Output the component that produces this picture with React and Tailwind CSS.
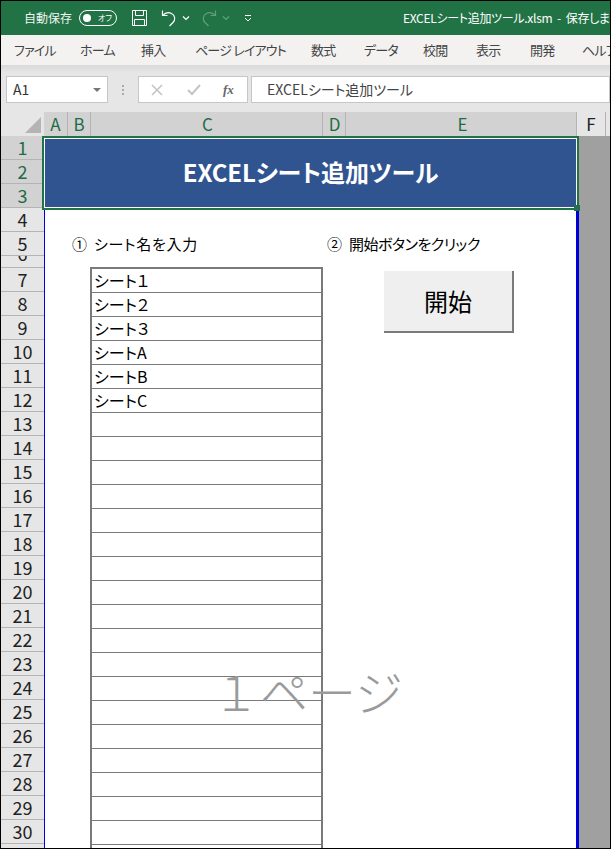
const JP = "font-['Noto_Sans_CJK_JP','Noto_Sans',sans-serif]";
const PALT = "[font-feature-settings:'palt']";

const TABS = [
  { label: "ファイル", width: "w-[66px]" },
  { label: "ホーム", width: "w-[61px]" },
  { label: "挿入", width: "w-[54px]" },
  { label: "ページ レイアウト", width: "w-[116px]" },
  { label: "数式", width: "w-[53px]" },
  { label: "データ", width: "w-[59px]" },
  { label: "校閲", width: "w-[53px]" },
  { label: "表示", width: "w-[54px]" },
  { label: "開発", width: "w-[52px]" },
  { label: "ヘルプ", width: "w-[60px]" },
];

const COLUMNS = [
  { label: "A", width: "w-[24px]" },
  { label: "B", width: "w-[23px]" },
  { label: "C", width: "w-[232px] pl-[2px]" },
  { label: "D", width: "w-[23px] pl-[1px]" },
  { label: "E", width: "w-[231px] pl-[3px]" },
];

const SHEET_NAMES = ["シート１", "シート２", "シート３", "シートA", "シートB", "シートC"];

const ROWS = Array.from({ length: 31 }, (_, i) => i + 1);
const LIST_ROWS = Array.from({ length: 25 }, (_, i) => SHEET_NAMES[i] ?? "");

const TitleBar = () => (
  <div className="h-[34px] shrink-0 bg-[#217346] flex items-center text-white overflow-hidden">
    <div className="w-[402px] shrink-0 flex items-center">
      <span className="ml-[23px] shrink-0 whitespace-nowrap text-[12px] text-[#f0f5f2]">自動保存</span>
      <div className="ml-[7px] shrink-0 w-[38px] h-[16px] rounded-full border border-white flex items-center justify-between pl-[3px] pr-[2px]">
        <span className="w-[8px] h-[8px] rounded-full bg-white" />
        <span className={`text-[8px] leading-none mr-[2px] whitespace-nowrap ${PALT}`}>オフ</span>
      </div>
      <svg className="ml-[14px] shrink-0" width="17" height="18" viewBox="0 0 17 18" fill="none" stroke="#fff" strokeWidth="1">
        <path d="M1.500 1.500h14v15h-14z" />
        <path d="M4.500 1.500v5h8v-5M3.500 16.500v-6h10v6" />
      </svg>
      <svg className="ml-[13px] shrink-0" width="16" height="18" viewBox="0 0 16 18" fill="none" stroke="#fff" strokeWidth="1.2">
        <path d="M1.500 1.500v5h5" />
        <path d="M1.500 6.500c2.500-2.500 6-3.500 9-2 4 2 4 6.500 1.500 9l-3.500 3.500" />
      </svg>
      <svg className="ml-[5px] shrink-0" width="8" height="6" viewBox="0 0 8 6" fill="none" stroke="#fff" strokeWidth="1.2">
        <path d="M1 1.500l3 3 3-3" />
      </svg>
      <svg className="ml-[11px] shrink-0" width="16" height="18" viewBox="0 0 16 18" fill="none" stroke="#5f9f7f" strokeWidth="1.2">
        <path d="M14.500 1.500v5h-5" />
        <path d="M14.500 6.500c-2.500-2.500-6-3.500-9-2-4 2-4 6.500-1.500 9l3.500 3.500" />
      </svg>
      <svg className="ml-[5px] shrink-0" width="8" height="6" viewBox="0 0 8 6" fill="none" stroke="#5f9f7f" strokeWidth="1.2">
        <path d="M1 1.500l3 3 3-3" />
      </svg>
      <svg className="ml-[14px] shrink-0" width="8" height="7" viewBox="0 0 8 7" fill="none" stroke="#fff" strokeWidth="1">
        <path d="M1 .5h6M1 3l3 3 3-3" />
      </svg>
    </div>
    <span className={`text-[12px] tracking-[-0.3px] whitespace-nowrap shrink-0 ${PALT}`}>
      EXCELシート追加ツール.xlsm&nbsp; -&nbsp; 保存しました
    </span>
  </div>
);

const TabBar = () => (
  <div className={`h-[30px] shrink-0 bg-[#f3f2f1] flex items-center pl-[13px] text-[13px] tracking-[-0.8px] text-[#444] whitespace-nowrap overflow-hidden ${PALT}`}>
    {TABS.map(({ label, width }) => (
      <span key={label} className={`${width} shrink-0`}>
        {label}
      </span>
    ))}
  </div>
);

const FormulaBar = () => (
  <div className="h-[47px] shrink-0 bg-[linear-gradient(#d9d9d9,#e6e6e6_8px)] flex items-start pt-[11px] pl-[5px]">
    <div className="w-[102px] h-[27px] bg-white border border-[#c6c6c6] flex items-center justify-between pl-[6px] pr-[6px] text-[14px] text-[#333]">
      A1
      <span className="w-0 h-0 border-x-[4px] border-x-transparent border-t-[4px] border-t-[#777]" />
    </div>
    <div className="w-[30px] h-[27px] flex flex-col items-center justify-center gap-[2px]">
      <span className="w-[2px] h-[2px] bg-[#aaa]" />
      <span className="w-[2px] h-[2px] bg-[#aaa]" />
      <span className="w-[2px] h-[2px] bg-[#aaa]" />
    </div>
    <div className="w-[110px] h-[27px] bg-white border border-[#c6c6c6] flex items-center">
      <svg className="ml-[12px]" width="12" height="12" viewBox="0 0 12 12" stroke="#c4c4c4" strokeWidth="1.6">
        <path d="M1 1l10 10M11 1L1 11" />
      </svg>
      <svg className="ml-[24px]" width="14" height="12" viewBox="0 0 14 12" fill="none" stroke="#c4c4c4" strokeWidth="2">
        <path d="M1 6l4 4 8-9" />
      </svg>
      <span className="ml-[22px] text-[13px] italic font-bold font-['Liberation_Serif',serif] text-[#666]">fx</span>
    </div>
    <div className={`ml-[3px] flex-1 h-[27px] bg-white border border-[#c6c6c6] flex items-center pl-[15px] text-[14px] text-[#444] whitespace-nowrap overflow-hidden ${PALT}`}>
      EXCELシート追加ツール
    </div>
  </div>
);

const ColumnHeader = () => (
  <div className="h-[24px] shrink-0 bg-[#e6e6e6] flex">
    <div className="w-[43px] shrink-0 flex items-end justify-end pr-[3px] pb-[3px]">
      <span className="w-0 h-0 border-l-[16px] border-l-transparent border-b-[16px] border-b-[#b4b4b4]" />
    </div>
    {COLUMNS.map(({ label, width }) => (
      <div
        key={label}
        className={`${width} shrink-0 bg-[#d2d2d2] border-r border-[#b4b4b4] flex items-center justify-center text-[17px] text-[#1f6b46]`}
      >
        {label}
      </div>
    ))}
    <div className="w-[29px] shrink-0 border-r border-[#b4b4b4] flex items-center justify-center text-[17px] text-[#222]">
      F
    </div>
  </div>
);

const RowHeader = () => (
  <div className="w-[43px] shrink-0 bg-[#e6e6e6] flex flex-col">
    {ROWS.map((n) => (
      <div
        key={n}
        className={`${n === 6 ? "h-[12px] items-end pb-[5px] overflow-hidden" : "h-[24px] items-center pb-[1px]"} shrink-0 border-b border-[#b4b4b4] flex justify-center text-[18px] leading-none ${n <= 3 ? "bg-[#d2d2d2] text-[#1f6b46]" : "text-[#222]"}`}
      >
        {n}
      </div>
    ))}
  </div>
);

const Sheet = () => (
  <div className="relative w-[535px] shrink-0 bg-white border-l border-[#0000e0] border-r-[3px] border-r-[#0000d8]">
    <div className="relative -ml-[3px] -mr-[3px] h-[74px] bg-[#30548f] border-2 border-[#217346] outline outline-white -outline-offset-3 flex items-center justify-center pb-[2px]">
      <span className={`text-white text-[24px] font-bold tracking-[-0.1px] whitespace-nowrap ${PALT}`}>EXCELシート追加ツール</span>
      <span className="absolute -right-[3px] -bottom-[3px] w-[6px] h-[6px] bg-[#217346]" />
    </div>
    <div className="flex">
      <div className="w-[282px] shrink-0 pl-[27px]">
        <p className={`h-[57px] pt-[23px] flex gap-[7px] text-[15px] text-black whitespace-nowrap ${PALT}`}>
          <span>①</span>
          <span className="tracking-[0.7px]">シート名を入力</span>
        </p>
        <div className="ml-[18px] w-[233px] border-2 border-b-0 border-[#7a7a7a]">
          {LIST_ROWS.map((name, i) => (
            <div
              key={i}
              className={`h-[24px] border-b border-[#7a7a7a] pl-[2px] text-[16px] leading-[23px] text-black ${PALT}`}
            >
              {name}
            </div>
          ))}
        </div>
      </div>
      <div className="flex-1">
        <p className={`h-[61px] pt-[23px] flex gap-[7px] text-[15px] text-black whitespace-nowrap ${PALT}`}>
          <span>②</span>
          <span className="tracking-[-0.5px]">開始ボタンをクリック</span>
        </p>
        <button className="ml-[57px] w-[130px] h-[62px] bg-[#efefef] border-r-2 border-b-2 border-[#7a7a7a] text-[24px] text-black">
          開始
        </button>
      </div>
    </div>
    <span className="absolute left-[167px] top-[530px] text-[48px] font-light leading-none text-[#9a9a9a] whitespace-nowrap">
      １ページ
    </span>
  </div>
);

export default function App() {
  return (
    <div className={`${JP} w-[611px] h-[849px] overflow-hidden border border-black flex flex-col bg-[#a0a0a0]`}>
      <TitleBar />
      <TabBar />
      <FormulaBar />
      <ColumnHeader />
      <div className="flex flex-1 overflow-hidden">
        <RowHeader />
        <Sheet />
      </div>
    </div>
  );
}
